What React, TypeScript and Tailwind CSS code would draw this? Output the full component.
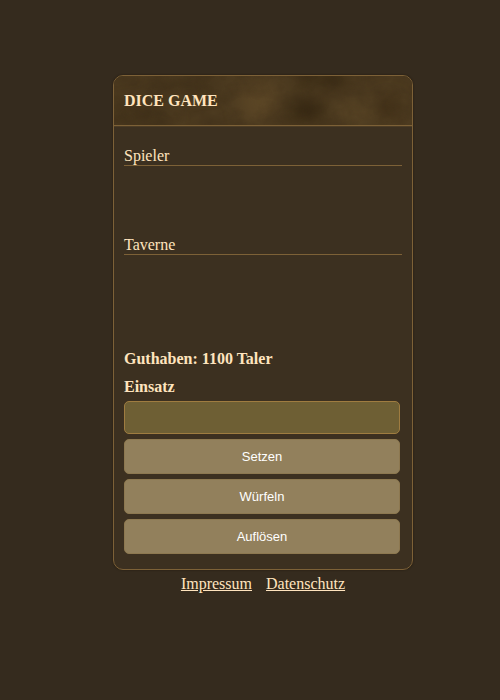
import type { ReactNode } from "react";

function LeatherTexture() {
  return (
    <svg
      className="absolute inset-0 h-full w-full"
      viewBox="0 0 298 49"
      preserveAspectRatio="none"
      aria-hidden="true"
    >
      <defs>
        <filter id="grain" x="0" y="0" width="100%" height="100%" colorInterpolationFilters="sRGB">
          <feTurbulence type="fractalNoise" baseFrequency="0.04 0.05" numOctaves="5" seed="8" />
          <feColorMatrix values="0 0 0 0 0.16  0 0 0 0 0.11  0 0 0 0 0.06  1.5 0 0 0 -0.5" />
        </filter>
        <filter
          id="soft"
          x="-100%"
          y="-100%"
          width="300%"
          height="300%"
          colorInterpolationFilters="sRGB"
        >
          <feGaussianBlur stdDeviation="8" />
        </filter>
      </defs>
      <rect width="298" height="49" fill="#4d3b20" />
      <g filter="url(#soft)">
        <ellipse cx="28" cy="38" rx="32" ry="12" fill="#43331b" />
        <ellipse cx="75" cy="8" rx="36" ry="9" fill="#43331b" />
        <ellipse cx="145" cy="26" rx="20" ry="20" fill="#5a4525" />
        <ellipse cx="192" cy="35" rx="20" ry="9" fill="#352711" />
        <ellipse cx="210" cy="3" rx="30" ry="8" fill="#3a2b14" />
        <ellipse cx="240" cy="37" rx="16" ry="9" fill="#5f4a28" />
        <ellipse cx="275" cy="32" rx="10" ry="12" fill="#443218" />
      </g>
      <rect width="298" height="49" filter="url(#grain)" opacity="0.28" />
    </svg>
  );
}

function DiceRow({ name, children }: { name: string; children?: ReactNode }) {
  return (
    <section>
      <h2 className="border-b border-[#7d6137]">{name}</h2>
      <div className="h-[70px]">{children}</div>
    </section>
  );
}

function GameButton({ label }: { label: string }) {
  return (
    <button
      type="button"
      className="h-[35px] rounded-[5px] border border-[#8d7850] bg-[#92805c] font-['Liberation_Sans',Arial,sans-serif] text-[13px] text-white"
    >
      {label}
    </button>
  );
}

export default function App() {
  return (
    <div className="flex min-h-screen flex-col items-center bg-[#352b1e] pt-[75px] pl-[26px] font-['Liberation_Serif','Times_New_Roman',serif] text-base leading-[18px] text-[#ffe4be]">
      <main className="w-full max-w-[300px] overflow-hidden rounded-[10px] border border-[#7d6137] bg-[#3c3020] shadow-[0_0_2px_#20180e]">
        <header className="relative border-b border-[#7d6137] px-2.5 pt-4 pb-[15px] shadow-[0_1px_0_#4c3c25]">
          <LeatherTexture />
          <h1 className="relative font-bold">DICE GAME</h1>
        </header>
        <div className="px-2.5 pt-[21px] pb-[15px]">
          <DiceRow name="Spieler" />
          <DiceRow name="Taverne" />
          <p className="mt-[25px] font-bold">Guthaben: 1100 Taler</p>
          <form className="mt-2.5 mr-0.5 flex flex-col gap-[5px]">
            <label htmlFor="stake" className="font-bold">
              Einsatz
            </label>
            <input
              id="stake"
              type="text"
              className="h-[33px] w-full rounded-[5px] border border-[#9f7c40] bg-[#6e5f34] px-2 outline-none"
            />
            <GameButton label="Setzen" />
            <GameButton label="Würfeln" />
            <GameButton label="Auflösen" />
          </form>
        </div>
      </main>
      <footer className="mt-[5px] flex gap-3.5">
        <a href="#impressum" className="underline">
          Impressum
        </a>
        <a href="#datenschutz" className="underline">
          Datenschutz
        </a>
      </footer>
    </div>
  );
}
